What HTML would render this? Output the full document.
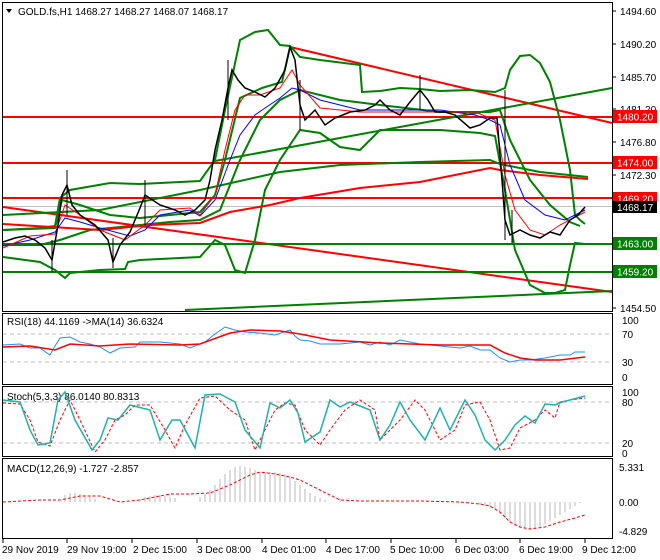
<!DOCTYPE html>
<html><head><meta charset="utf-8"><style>
body{margin:0;background:#fff;}
svg{display:block;font-family:"Liberation Sans",sans-serif;font-size:10px;}
</style></head><body>
<svg width="660" height="560" xmlns="http://www.w3.org/2000/svg">
<rect width="660" height="560" fill="#fff"/>
<g fill="none" stroke="#000" stroke-width="1">
<rect x="2.5" y="2.5" width="610" height="309"/>
<rect x="2.5" y="313.5" width="610" height="71"/>
<rect x="2.5" y="386.5" width="610" height="70"/>
<rect x="2.5" y="458.5" width="610" height="80"/>
</g>
<line x1="3" y1="206.5" x2="612" y2="206.5" stroke="#c0c0c0"/>
<g stroke="#f00" stroke-width="2">
<line x1="3" y1="117" x2="612" y2="117"/>
<line x1="3" y1="163" x2="612" y2="163"/>
<line x1="3" y1="198" x2="612" y2="198"/>
<line x1="290" y1="47" x2="612" y2="123"/>
<line x1="3" y1="207" x2="612" y2="292"/>
</g>
<g stroke="#008000" stroke-width="2" fill="none">
<line x1="3" y1="244" x2="612" y2="244"/>
<line x1="3" y1="272" x2="612" y2="272"/>
<line x1="215" y1="161" x2="612" y2="88"/>
<line x1="185" y1="310" x2="612" y2="291"/>
<polyline points="3,230 40,228 55,226 60,198 70,190 110,183 140,184 200,181 215,160 225,110 240,40 255,32 268,30 280,45 290,46 300,57 320,60 360,65 362,92 380,91 400,88 420,89 440,91 470,90 495,92 505,88 510,70 520,56 530,55 540,63 550,82 560,120 570,170 575,215 580,220 585,224"/>
<polyline points="3,257 40,262 55,270 65,278 70,273 100,270 125,269 128,262 140,260 200,257 215,240 225,245 235,270 245,273 255,240 265,190 280,160 300,130 320,133 340,147 360,150 370,140 380,130 440,130 480,133 495,136 505,190 515,250 530,285 545,293 555,293 565,290 570,265 575,243 585,244"/>
<polyline points="3,245 40,245 60,240 90,230 110,228 140,225 170,222 200,220 220,210 240,160 260,120 280,100 300,90 340,100 380,105 440,112 490,112 500,110 510,140 530,180 550,205 570,222 580,226"/>
<polyline points="3,230 55,228 62,200 80,205 110,215 140,218 200,212 215,195 225,160 240,98 262,88 282,82 290,47"/>
<polyline points="3,215 100,210 200,190 280,172 340,165 420,162 490,160 500,164 540,172 588,177"/>
</g>
<polyline fill="none" stroke="#f00" stroke-width="2" points="3,224 100,230 150,225 200,223 230,212 270,205 300,198 360,188 420,182 490,168 500,170 540,175 588,179"/>
<polyline fill="none" stroke="#00f" stroke-width="1" points="3,246 30,240 55,232 65,218 80,222 100,228 130,236 145,230 160,215 190,210 200,216 215,200 230,160 240,135 255,115 265,108 280,98 292,88 300,90 320,100 360,110 400,110 440,110 475,115 490,120 500,125 510,165 525,200 545,215 565,220 585,210"/>
<polyline fill="none" stroke="#f00" stroke-width="1" points="3,248 30,236 55,234 65,205 80,215 100,230 125,240 145,225 160,210 190,208 200,215 215,195 225,150 235,110 245,95 260,95 280,88 292,70 300,85 320,108 360,112 400,112 440,112 475,112 495,120 505,175 515,210 530,230 545,235 560,225 585,212"/>
<polyline fill="none" stroke="#000" stroke-width="1.5" points="3,242 15,238 25,236 35,240 45,248 52,260 58,225 62,195 67,185 72,205 80,215 95,225 108,240 113,262 120,245 130,232 140,208 145,195 160,205 175,210 185,215 195,210 205,200 210,180 215,150 222,120 228,88 232,70 238,80 245,88 255,92 265,97 275,88 285,70 290,47 295,60 300,105 305,120 315,110 325,125 335,118 350,112 365,110 375,105 380,100 390,110 400,115 410,102 420,90 428,100 435,112 445,112 455,115 470,128 480,125 490,118 497,118 502,180 505,220 510,235 520,230 530,235 540,238 550,232 560,235 570,220 578,215 585,207"/>
<g stroke="#000" stroke-width="1">
<line x1="67" y1="170" x2="67" y2="215"/><line x1="52" y1="240" x2="52" y2="272"/><line x1="113" y1="238" x2="113" y2="268"/>
<line x1="145" y1="180" x2="145" y2="225"/><line x1="228" y1="60" x2="228" y2="120"/><line x1="300" y1="80" x2="300" y2="130"/>
<line x1="420" y1="75" x2="420" y2="110"/><line x1="505" y1="90" x2="505" y2="240"/><line x1="512" y1="210" x2="512" y2="243"/>
</g>
<g fill="#000">
<text x="620" y="15">1494.60</text>
<text x="620" y="48">1490.20</text>
<text x="620" y="81">1485.70</text>
<text x="620" y="113">1481.20</text>
<text x="620" y="146">1476.80</text>
<text x="620" y="179">1472.30</text>
<text x="620" y="312">1454.50</text>
</g>
<g stroke="#000"><line x1="612" y1="11" x2="616" y2="11"/><line x1="612" y1="44" x2="616" y2="44"/><line x1="612" y1="77" x2="616" y2="77"/><line x1="612" y1="109" x2="616" y2="109"/><line x1="612" y1="142" x2="616" y2="142"/><line x1="612" y1="175" x2="616" y2="175"/><line x1="612" y1="308" x2="616" y2="308"/></g>
<rect x="613" y="110" width="44" height="13" fill="#f00"/><text x="617" y="120.5" fill="#fff">1480.20</text>
<rect x="613" y="156" width="44" height="13" fill="#f00"/><text x="617" y="166.5" fill="#fff">1474.00</text>
<rect x="613" y="192" width="44" height="13" fill="#f00"/><text x="617" y="202.5" fill="#fff">1469.20</text>
<rect x="613" y="201" width="44" height="12" fill="#000"/><text x="617" y="211" fill="#fff">1468.17</text>
<rect x="613" y="237" width="44" height="13" fill="#008000"/><text x="617" y="247.5" fill="#fff">1463.00</text>
<rect x="613" y="265" width="44" height="13" fill="#008000"/><text x="617" y="275.5" fill="#fff">1459.20</text>
<path d="M6,9 L12,9 L9,13 Z" fill="#000"/>
<text x="18" y="15">GOLD.fs,H1  1468.27 1468.27 1468.07 1468.17</text>
<g stroke="#c0c0c0" stroke-dasharray="4,3"><line x1="3" y1="334" x2="612" y2="334"/><line x1="3" y1="362" x2="612" y2="362"/></g>
<text x="7" y="325">RSI(18) 44.1169  -&gt;MA(14) 36.6324</text>
<g><text x="622" y="324">100</text><text x="622" y="338">70</text><text x="622" y="366">30</text><text x="622" y="381">0</text></g>
<polyline fill="none" stroke="#1e90ff" stroke-width="1" points="3,345 20,344 30,348 40,348 50,355 55,346 60,338 70,337 80,342 90,344 100,347 110,353 120,348 135,347 140,342 160,342 180,344 190,348 205,342 215,334 225,327 235,330 245,332 260,333 275,335 290,330 295,336 300,340 310,341 320,344 340,344 360,342 370,345 380,342 390,345 400,340 420,344 440,346 460,348 470,346 480,350 490,350 500,358 510,362 520,360 530,360 545,358 560,355 570,355 575,352 585,352"/>
<polyline fill="none" stroke="#f00" stroke-width="1.5" points="3,347 30,346 55,350 70,344 100,346 130,344 180,345 200,344 230,333 250,330 280,331 300,334 330,340 380,343 440,345 470,345 490,345 505,353 520,358 535,360 560,360 585,357"/>
<g stroke="#c0c0c0" stroke-dasharray="4,3"><line x1="3" y1="402" x2="612" y2="402"/><line x1="3" y1="443" x2="612" y2="443"/></g>
<text x="7" y="400">Stoch(5,3,3) 86.0140 80.8313</text>
<g><text x="622" y="396">100</text><text x="622" y="406">80</text><text x="622" y="447">20</text><text x="622" y="457">0</text></g>
<polyline fill="none" stroke="#f00" stroke-width="1" stroke-dasharray="3,2" points="3,403 20,404 30,420 38,442 50,446 60,420 70,400 80,420 95,452 105,440 115,420 125,415 135,405 150,405 165,430 175,448 185,425 200,398 215,396 230,410 245,420 255,450 265,430 275,410 285,403 295,405 305,430 320,445 330,430 345,410 360,400 375,410 380,440 400,420 415,400 425,410 440,440 455,430 465,405 480,402 490,420 500,450 510,448 520,428 535,420 545,410 555,418 560,402 570,400 585,398"/>
<polyline fill="none" stroke="#20b2aa" stroke-width="1.5" points="3,400 20,402 30,430 38,445 50,443 58,400 65,392 75,420 92,450 100,440 108,418 118,420 130,405 150,410 160,440 172,420 180,420 195,448 205,395 220,394 235,402 245,430 260,448 270,403 280,408 290,400 298,413 305,442 320,432 330,400 340,407 350,402 360,406 370,410 380,440 390,425 400,402 410,420 425,440 440,408 450,430 465,400 475,415 485,440 495,450 505,440 515,425 525,416 535,423 545,404 555,405 562,402 570,400 585,396"/>
<text x="7" y="472">MACD(12,26,9) -1.727 -2.857</text>
<g><text x="619" y="471">5.331</text><text x="619" y="506">0.00</text><text x="619" y="535">-4.829</text></g>
<g stroke="#b8b8b8" stroke-width="1">
<path d="M65,502V495 M70,502V493 M75,502V493 M80,502V494 M85,502V495 M90,502V497 M95,502V499 M140,502V499 M145,502V497 M150,502V496 M155,502V495 M160,502V495 M165,502V496 M170,502V497 M175,502V498 M200,502V497 M205,502V494 M210,502V490 M215,502V485 M220,502V479 M225,502V474 M230,502V470 M235,502V467 M240,502V466 M245,502V467 M250,502V468 M255,502V470 M260,502V472 M265,502V472 M270,502V472 M275,502V472 M280,502V473 M285,502V474 M290,502V477 M295,502V481 M300,502V485 M305,502V489 M310,502V493 M315,502V496 M320,502V498 M325,502V500 M340,502V499 M480,502V505 M485,502V506 M490,502V508 M495,502V510 M500,502V514 M505,502V518 M510,502V522 M515,502V526 M520,502V528 M525,502V530 M530,502V530 M535,502V529 M540,502V527 M545,502V524 M550,502V521 M555,502V518 M560,502V515 M565,502V512 M570,502V509 M575,502V506 M580,502V503"/>
</g>
<polyline fill="none" stroke="#f00" stroke-width="1" stroke-dasharray="3,2" points="3,502 40,500 60,500 80,496 100,496 120,502 140,500 170,494 190,494 210,493 230,485 250,475 260,472 275,474 290,477 300,480 320,490 340,500 360,501 420,501 460,502 480,504 490,506 500,512 510,522 520,527 530,529 545,527 560,522 575,518 585,515"/>
<g stroke="#000"><line x1="3" y1="539" x2="3" y2="543"/><line x1="67" y1="539" x2="67" y2="543"/><line x1="132" y1="539" x2="132" y2="543"/><line x1="197" y1="539" x2="197" y2="543"/><line x1="262" y1="539" x2="262" y2="543"/><line x1="326" y1="539" x2="326" y2="543"/><line x1="391" y1="539" x2="391" y2="543"/><line x1="456" y1="539" x2="456" y2="543"/><line x1="520" y1="539" x2="520" y2="543"/><line x1="585" y1="539" x2="585" y2="543"/></g>
<g>
<text x="2" y="553">29 Nov 2019</text>
<text x="67" y="553">29 Nov 19:00</text>
<text x="133" y="553">2 Dec 15:00</text>
<text x="197" y="553">3 Dec 08:00</text>
<text x="262" y="553">4 Dec 01:00</text>
<text x="326" y="553">4 Dec 17:00</text>
<text x="390" y="553">5 Dec 10:00</text>
<text x="455" y="553">6 Dec 03:00</text>
<text x="519" y="553">6 Dec 19:00</text>
<text x="582" y="553">9 Dec 12:00</text>
</g>
</svg>
</body></html>
